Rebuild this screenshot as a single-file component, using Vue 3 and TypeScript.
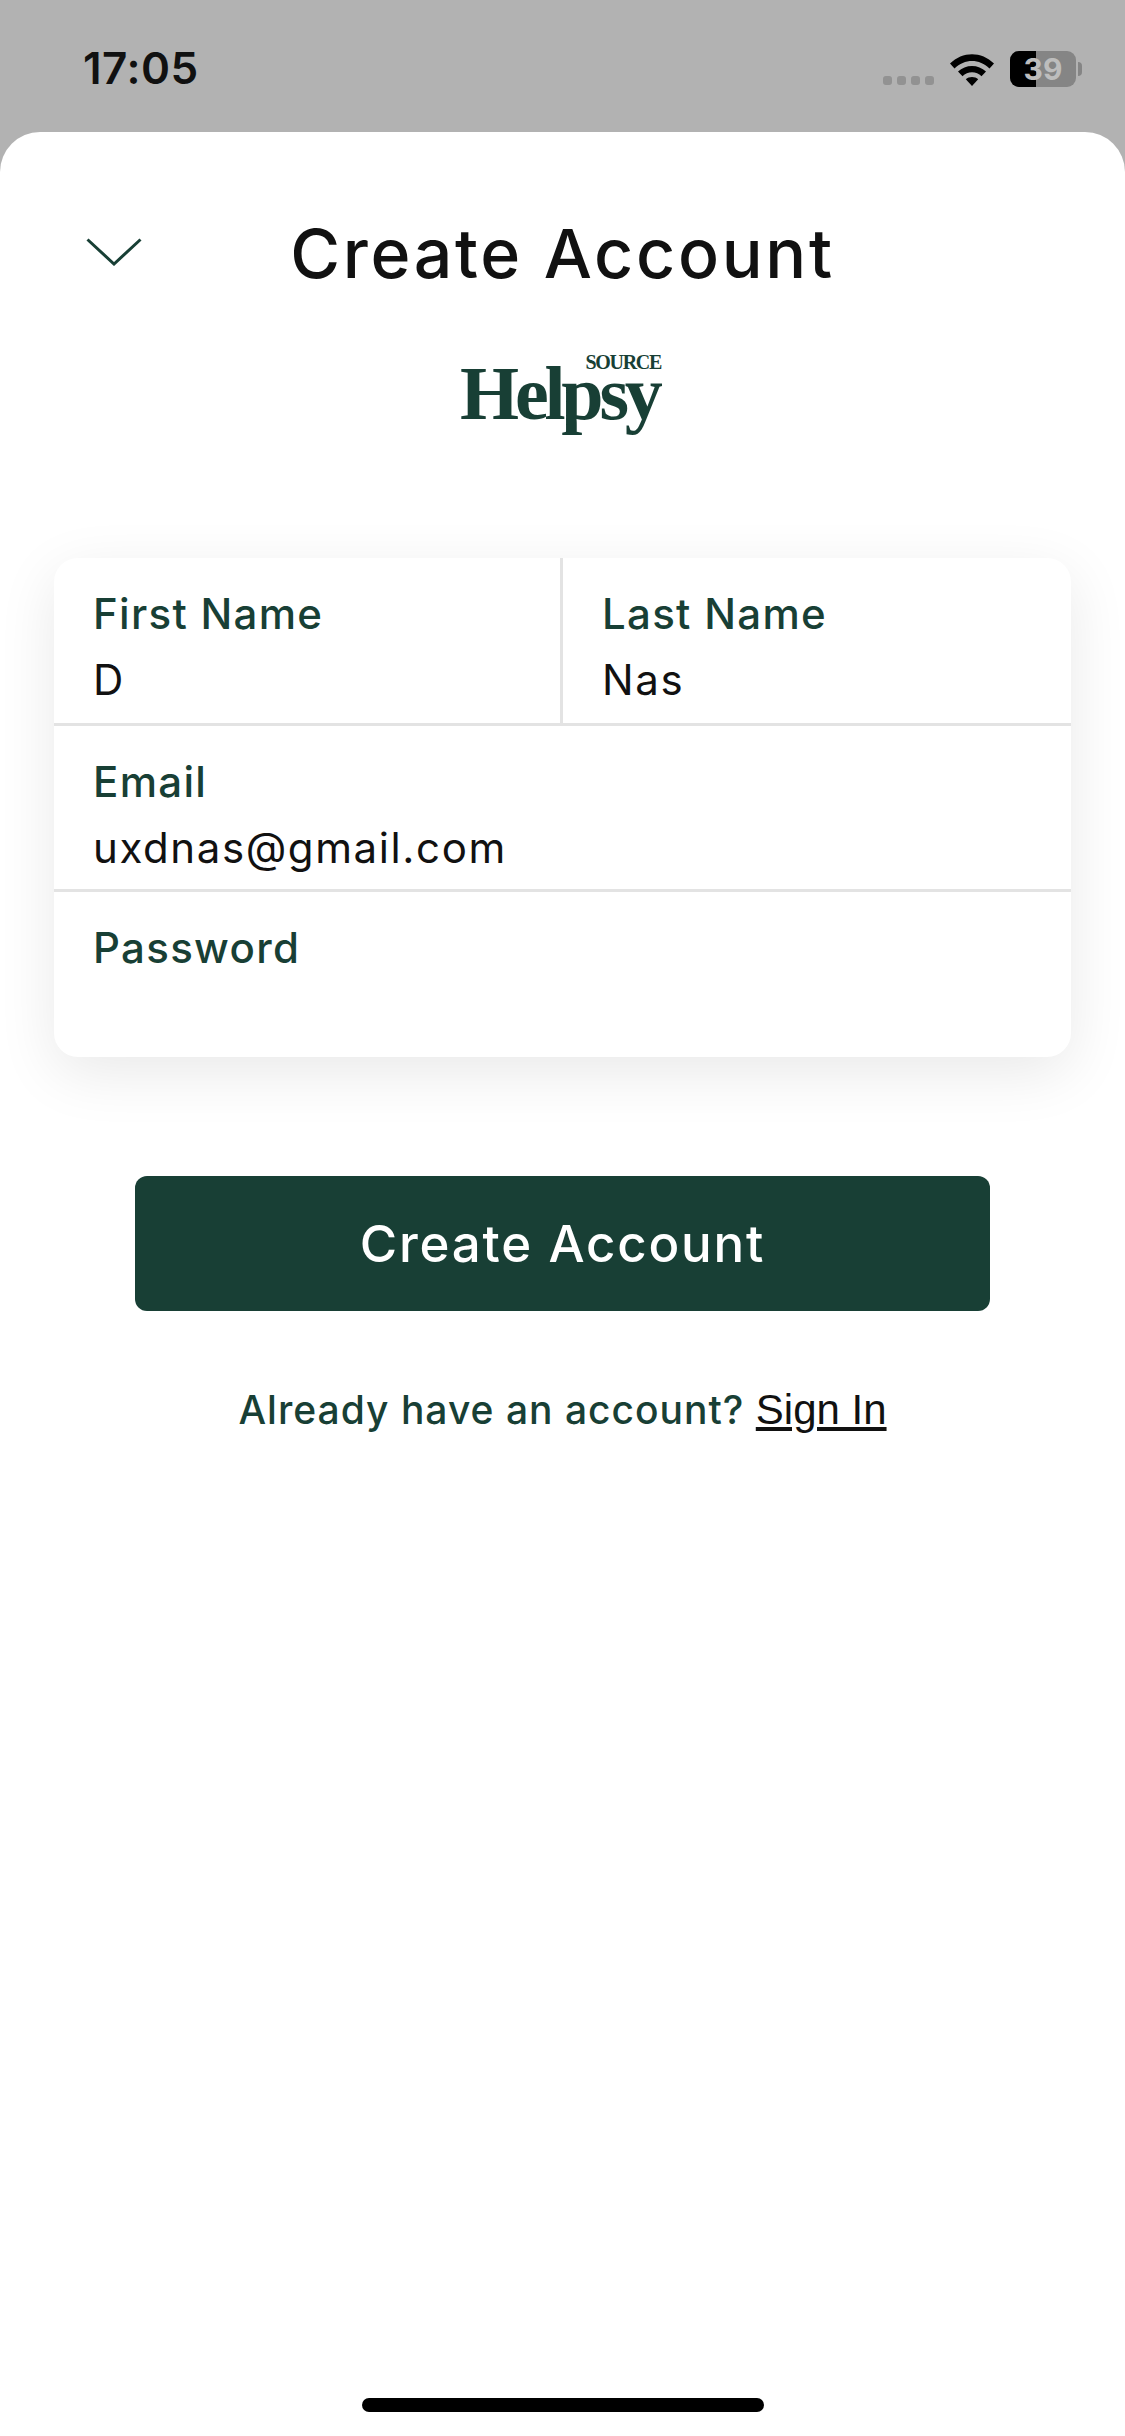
<script setup lang="ts">
const dots: number[] = [0, 1, 2, 3]
</script>

<template>
  <div class="page">
    <header class="status">
      <span class="time">17:05</span>
      <div class="status-icons">
        <div class="dots"><i v-for="d in dots" :key="d"></i></div>
        <svg class="wifi" width="46" height="35" viewBox="0 0 46 35">
          <path d="M1 11.5C13.500 -1 32.500 -1 45 11.500L40.500 16.500C30.500 6.500 15.500 6.500 5.500 16.500Z" fill="#000"/>
          <path d="M9 19.500C16.500 12 29.500 12 37 19.500L32.500 24.300C27.500 19 18.500 19 13.500 24.300Z" fill="#000"/>
          <path d="M16.800 27.300C20 24.200 26 24.200 29.200 27.300L23 34Z" fill="#000"/>
        </svg>
        <div class="battery">
          <div class="battery-body">
            <div class="battery-fill"></div>
            <span class="battery-num">39</span>
          </div>
          <div class="battery-cap"></div>
        </div>
      </div>
    </header>

    <main class="sheet">
      <div class="topbar">
        <svg class="chevron" width="56" height="28" viewBox="0 0 56 28">
          <path d="M1.500 1.500L28 26L54.500 1.500" fill="none" stroke="#183f35" stroke-width="3"/>
        </svg>
        <h1 class="title">Create Account</h1>
      </div>

      <div class="logo">
        <span class="logo-source">SOURCE</span>
        <span class="logo-name">Helpsy</span>
      </div>

      <section class="card">
        <div class="row top">
          <div class="field first">
            <label>First Name</label>
            <div class="value">D</div>
          </div>
          <div class="field second">
            <label>Last Name</label>
            <div class="value">Nas</div>
          </div>
        </div>
        <div class="row">
          <div class="field">
            <label>Email</label>
            <div class="value">uxdnas@gmail.com</div>
          </div>
        </div>
        <div class="row last">
          <div class="field">
            <label>Password</label>
          </div>
        </div>
      </section>

      <button class="cta">Create Account</button>

      <p class="signin">Already have an account? <a>Sign In</a></p>

      <div class="home-bar"></div>
    </main>
  </div>
</template>

<style>
html, body { margin: 0; padding: 0; background: #fff; }
</style>

<style scoped>
.page {
  width: 1125px;
  height: 2436px;
  background: #b2b2b2;
  display: flex;
  flex-direction: column;
  overflow: hidden;
  font-family: "Inter", "Liberation Sans", sans-serif;
}
.status {
  height: 132px;
  flex: none;
  box-sizing: border-box;
  padding: 43px 43px 0 83px;
  display: flex;
  justify-content: space-between;
  align-items: flex-start;
}
.time {
  font-size: 44px;
  line-height: 50px;
  font-weight: 600;
  color: #111;
  letter-spacing: 0.5px;
}
.status-icons {
  display: flex;
  align-items: center;
  gap: 15px;
  height: 40px;
  margin-top: 6px;
}
.dots {
  display: flex;
  gap: 5px;
  margin-top: 23px;
}
.dots i {
  width: 9px;
  height: 9px;
  border-radius: 3px;
  background: #929292;
}
.battery {
  display: flex;
  align-items: center;
  gap: 2px;
}
.battery-body {
  position: relative;
  width: 66px;
  height: 36px;
  border-radius: 9px;
  background: #858585;
  overflow: hidden;
  display: flex;
  align-items: center;
  justify-content: center;
}
.battery-fill {
  position: absolute;
  left: 0;
  top: 0;
  bottom: 0;
  width: 26px;
  background: #000;
}
.battery-num {
  position: relative;
  font-weight: 700;
  font-size: 30px;
  line-height: 36px;
  color: #bdbdbd;
}
.battery-cap {
  width: 4px;
  height: 14px;
  border-radius: 0 4px 4px 0;
  background: #858585;
}
.sheet {
  flex: 1;
  background: #fff;
  border-radius: 40px 40px 0 0;
  display: flex;
  flex-direction: column;
  align-items: center;
  position: relative;
}
.topbar {
  width: 100%;
  display: flex;
  justify-content: center;
  position: relative;
  padding-top: 81px;
}
.chevron {
  position: absolute;
  left: 86px;
  top: 106px;
}
.title {
  margin: 0;
  font-size: 68px;
  line-height: 80px;
  font-weight: 500;
  color: #111;
  letter-spacing: 2.700px;
}
.logo {
  width: 199px;
  margin-top: 59px;
  color: #183f35;
  font-family: "Liberation Serif", serif;
  font-weight: 700;
  display: flex;
  flex-direction: column;
  align-items: flex-end;
}
.logo-source {
  font-size: 20px;
  line-height: 20px;
  letter-spacing: -1.300px;
  margin-right: 1px;
}
.logo-name {
  align-self: stretch;
  font-size: 76px;
  line-height: 42px;
  letter-spacing: -4.200px;
  white-space: nowrap;
  margin-left: -3px;
}
.card {
  width: 1017px;
  height: 499px;
  margin-top: 144px;
  background: #fff;
  border-radius: 24px;
  box-shadow: 0 16px 60px rgba(0, 0, 0, 0.09);
  display: flex;
  flex-direction: column;
  overflow: hidden;
}
.row {
  height: 166px;
  box-sizing: border-box;
  border-bottom: 3px solid #e3e3e3;
  display: flex;
}
.row.top { height: 168px; }
.row.last { border-bottom: none; flex: 1; }
.field {
  flex: 1;
  box-sizing: border-box;
  padding: 31px 0 0 39px;
}
.field.first {
  flex: none;
  width: 509px;
  border-right: 3px solid #e3e3e3;
}
label {
  display: block;
  font-size: 42px;
  line-height: 50px;
  color: #183f35;
  letter-spacing: 1.300px;
  font-weight: 500;
}
.value {
  font-size: 42px;
  line-height: 50px;
  margin-top: 16px;
  color: #111;
  letter-spacing: 1.600px;
}
.cta {
  width: 855px;
  height: 135px;
  margin-top: 119px;
  background: #183f35;
  border: none;
  border-radius: 12px;
  color: #fff;
  font-family: inherit;
  font-size: 51px;
  letter-spacing: 1.800px;
  font-weight: 500;
  padding: 0;
}
.signin {
  margin: 69px 0 0;
  font-size: 39px;
  line-height: 60px;
  font-weight: 500;
  color: #183f35;
  letter-spacing: 1px;
}
.signin a {
  font-family: "Liberation Sans", sans-serif;
  font-weight: 400;
  font-size: 42px;
  color: #111;
  text-decoration: underline;
  letter-spacing: 0;
}
.home-bar {
  position: absolute;
  left: 362px;
  top: 2266px;
  width: 402px;
  height: 14px;
  border-radius: 7px;
  background: #000;
}
</style>
